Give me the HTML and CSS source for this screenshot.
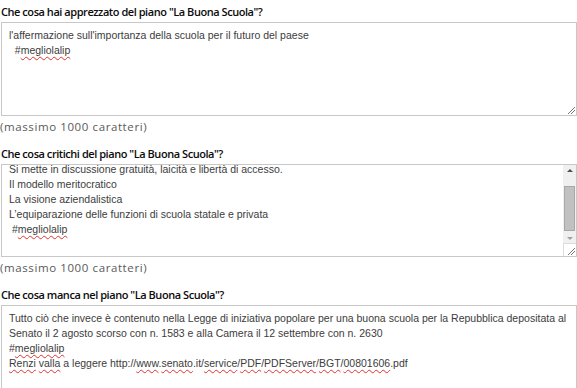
FILE: index.html
```html
<!DOCTYPE html>
<html lang="it">
<head>
<meta charset="utf-8">
<link rel="stylesheet" href="styles.css">
</head>
<body>
<div class="form">
  <div class="field">
    <div class="q">Che cosa hai apprezzato del piano "La Buona Scuola"?</div>
    <div class="box box-1">
      <div class="text">
        <div class="line">l'affermazione sull'importanza della scuola per il futuro del paese</div>
        <div class="line">&nbsp;&nbsp;#<span class="sp">megliolalip</span></div>
      </div>
      <span class="grip"></span>
    </div>
    <div class="hint">(massimo 1000 caratteri)</div>
  </div>

  <div class="field">
    <div class="q">Che cosa critichi del piano "La Buona Scuola"?</div>
    <div class="box box-2">
      <div class="text scrolled">
        <div class="line">Si mette in discussione gratuità, laicità e libertà di accesso.</div>
        <div class="line">Il modello meritocratico</div>
        <div class="line">La visione aziendalistica</div>
        <div class="line">L’equiparazione delle funzioni di scuola statale e privata</div>
        <div class="line">&nbsp;#<span class="sp">megliolalip</span></div>
      </div>
      <div class="scrollbar">
        <div class="sb-btn"><span class="tri-up"></span></div>
        <div class="sb-track"><div class="sb-thumb"></div></div>
        <div class="sb-btn"><span class="tri-down"></span></div>
        <div class="sb-corner"><span class="grip grip-in"></span></div>
      </div>
    </div>
    <div class="hint">(massimo 1000 caratteri)</div>
  </div>

  <div class="field">
    <div class="q">Che cosa manca nel piano "La Buona Scuola"?</div>
    <div class="box box-3">
      <div class="text">
        <div class="line">Tutto ciò che invece è contenuto nella Legge di iniziativa popolare per una buona scuola per la Repubblica depositata al</div>
        <div class="line">Senato il 2 agosto scorso con n. 1583 e alla Camera il 12 settembre con n. 2630</div>
        <div class="line">#<span class="sp">megliolalip</span></div>
        <div class="line"><span class="sp">Renzi</span> <span class="sp">valla</span> a leggere http://<span class="sp">www</span>.<span class="sp">senato</span>.it/<span class="sp">service</span>/<span class="sp">PDF</span>/<span class="sp">PDFServer</span>/<span class="sp">BGT</span>/<span class="sp">00801606</span>.pdf</div>
      </div>
    </div>
  </div>
</div>
</body>
</html>
```

FILE: styles.css
```css
html, body {
  margin: 0;
  padding: 0;
  background: #ffffff;
  overflow: hidden;
}

.form {
  display: flex;
  flex-direction: column;
  padding: 5px 0 0 1px;
}

.field {
  display: flex;
  flex-direction: column;
}

.q {
  font-family: "Open Sans", sans-serif;
  font-weight: 600;
  font-size: 11px;
  line-height: 14px;
  color: #0c0c0c;
  height: 17px;
  letter-spacing: -0.45px;
}

.box {
  position: relative;
  display: flex;
  border: 1px solid #c8c8c8;
  background: #ffffff;
  width: 574px;
}

.box-1 {
  height: 92px;
}

.box-2 {
  height: 91px;
}

.box-3 {
  height: 120px;
}

.text {
  flex: 1;
  padding: 5px 8px 0 7px;
  font-family: "Liberation Sans", Arial, sans-serif;
  font-size: 10.5px;
  line-height: 15px;
  color: #3c3c3c;
  overflow: hidden;
  white-space: nowrap;
}

.text.scrolled {
  padding-top: 0;
  margin-top: -3px;
}

.sp {
  text-decoration: underline wavy #e03030;
  text-decoration-thickness: 1px;
  text-underline-offset: 2px;
}

.hint {
  font-family: "Open Sans", sans-serif;
  font-size: 11.5px;
  letter-spacing: 0.6px;
  line-height: 14px;
  color: #5a5a5a;
  padding: 4px 0 13px 0;
  margin-left: -1px;
}

.grip {
  position: absolute;
  right: 1px;
  bottom: 1px;
  width: 7px;
  height: 7px;
  background:
    linear-gradient(135deg, transparent 45%, #777 45%, #777 55%, transparent 55%) no-repeat,
    linear-gradient(135deg, transparent 45%, #777 45%, #777 55%, transparent 55%) no-repeat;
  background-size: 7px 7px, 4px 4px;
  background-position: 0 0, 3px 3px;
}

.scrollbar {
  width: 13px;
  display: flex;
  flex-direction: column;
  background: #f0f0f0;
}

.sb-btn {
  height: 12px;
  display: flex;
  align-items: center;
  justify-content: center;
}

.tri-up {
  width: 0;
  height: 0;
  border-left: 3px solid transparent;
  border-right: 3px solid transparent;
  border-bottom: 3px solid #505050;
}

.tri-down {
  width: 0;
  height: 0;
  border-left: 3px solid transparent;
  border-right: 3px solid transparent;
  border-top: 3px solid #a0a0a0;
}

.sb-track {
  flex: 1;
  display: flex;
  flex-direction: column;
  padding: 10px 1px 2px 1px;
}

.sb-thumb {
  height: 43px;
  background: #c1c1c1;
  border: 1px solid #a8a8a8;
}

.sb-corner {
  position: relative;
  height: 13px;
  background: #ffffff;
  border-top: 1px solid #dcdcdc;
  border-left: 1px solid #dcdcdc;
}
```
